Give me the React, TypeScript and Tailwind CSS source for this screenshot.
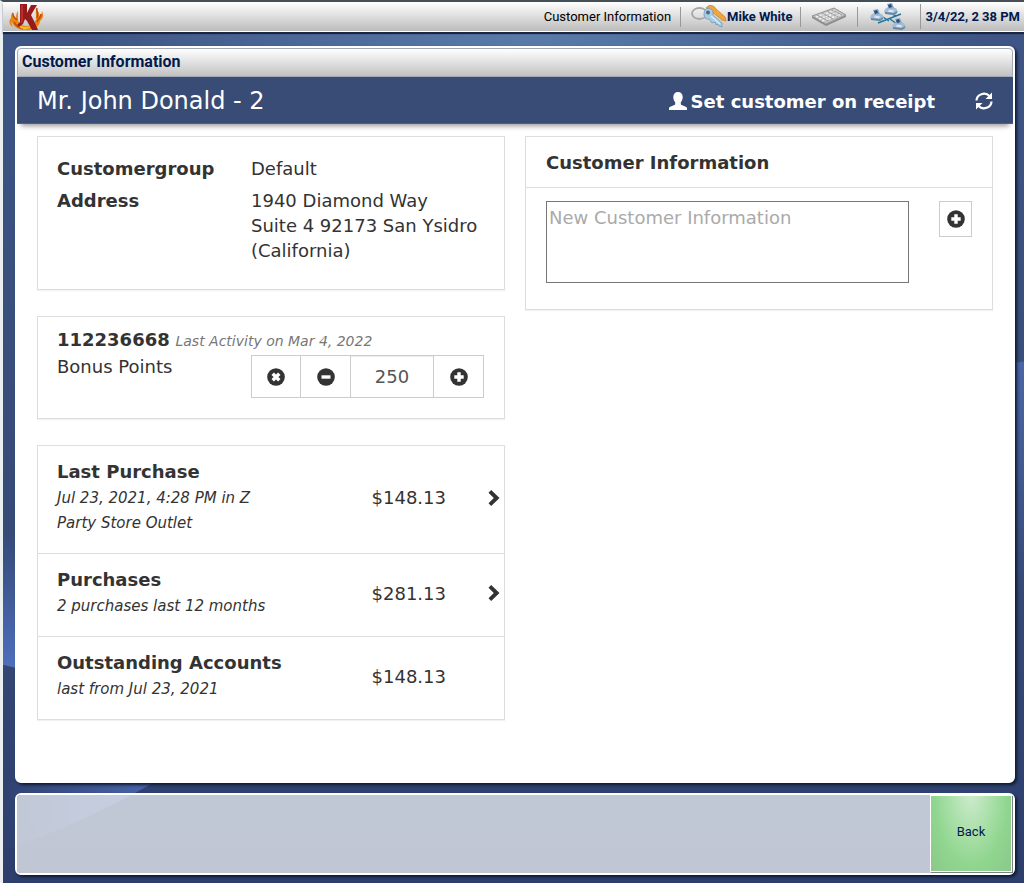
import clsx from "clsx";
import type { ReactNode } from "react";

type IconProps = { className?: string };

function Wallpaper() {
  return (
    <svg
      className="absolute inset-0 -z-10 h-full w-full"
      viewBox="0 0 1021 850"
      preserveAspectRatio="none"
      aria-hidden="true"
    >
      <defs>
        <linearGradient id="sky" x1="0" y1="0" x2="0" y2="1">
          <stop offset="0" stopColor="#3e5585" />
          <stop offset="0.6" stopColor="#364a78" />
          <stop offset="1" stopColor="#2d3e6d" />
        </linearGradient>
        <linearGradient id="glowLeft" x1="0" y1="0" x2="0" y2="1">
          <stop offset="0" stopColor="#4f6fbd" stopOpacity="0" />
          <stop offset="1" stopColor="#4f6fbd" />
        </linearGradient>
        <linearGradient id="glowRight" x1="0" y1="0" x2="0" y2="1">
          <stop offset="0" stopColor="#4a66a5" />
          <stop offset="1" stopColor="#4a66a5" stopOpacity="0" />
        </linearGradient>
        <linearGradient id="glowBottom" x1="0" y1="0" x2="1" y2="0">
          <stop offset="0" stopColor="#4864aa" stopOpacity="0" />
          <stop offset="1" stopColor="#4864aa" />
        </linearGradient>
        <radialGradient id="glowTop">
          <stop offset="0" stopColor="#5a7cab" />
          <stop offset="1" stopColor="#5a7cab" stopOpacity="0" />
        </radialGradient>
      </defs>
      <rect width="1021" height="850" fill="url(#sky)" />
      <ellipse cx="530" cy="0" rx="460" ry="150" fill="url(#glowTop)" />
      <path d="M0 500H12V635L0 632Z" fill="url(#glowLeft)" />
      <path d="M0 818Q80 790 150 750H0Z" fill="url(#glowBottom)" />
      <path d="M1008 331 1021 329V560H1008Z" fill="url(#glowRight)" />
    </svg>
  );
}

function Logo() {
  return (
    <svg className="h-7 w-9" viewBox="0 0 36 28" aria-hidden="true">
      <path
        d="M4 9c-2 3 1 5 3 7 0-3 0-5 2-8v9c1 4 5 6 9 6 5 0 9-3 9-8 0-4-1-6 1-10 0 3 3 4 2 8 2-1 3-3 3-5 2 4 1 8-2 10 0 5-6 9-13 9C10 27 4 24 3 19c-1 1 0 3 1 5-5-3-4-7-2-9 0-2 0-4 2-6Z"
        fill="#e98512"
      />
      <path
        d="M4 10c-1 3 2 5 4 7M28 5c-2 4 3 5 0 10M32 11c0 4-3 5-4 8M5 19c2 4 5 6 9 7"
        fill="none"
        stroke="#c2470c"
        strokeWidth="1.500"
      />
      <path d="M8 20c3 4 11 6 16 1-3 7-14 7-16-1Z" fill="#f8bd2b" />
      <path
        d="M11 1h7v9l4-8h6l-6 10 4 8 3 7h-6l-5-9-2-2-2 5-4 3-2-2 3-3Z"
        fill="#971b1b"
      />
      <path d="M12 2h2v17l-2 2Z" fill="#b92d2a" />
    </svg>
  );
}

function KeysIcon() {
  return (
    <svg className="h-6 w-9" viewBox="0 0 36 24" aria-hidden="true">
      <path
        d="M15 3c3-4 8-3 10 1l9 8 1 4-4-1-10-8Z"
        fill="#f0a63a"
        stroke="#c9822a"
        strokeWidth="0.8"
      />
      <ellipse
        cx="8.500"
        cy="8.500"
        rx="7.500"
        ry="5.500"
        fill="none"
        stroke="#a5a5a5"
        strokeWidth="1.800"
      />
      <path
        d="M14 5c2-3 7-2 8 2v3l9 8v4l-3-1-1-2-2 1-1-3-3 1-3-4c-5 1-6-5-4-9Z"
        fill="#abcbe2"
        stroke="#7198b5"
        strokeWidth="0.8"
      />
      <circle cx="17" cy="7.500" r="2" fill="#4c6882" />
      <path d="m20 11 9 8" stroke="#dfedf6" strokeWidth="1.200" />
    </svg>
  );
}

function KeyboardIcon() {
  return (
    <svg className="h-5 w-9" viewBox="0 0 36 20" aria-hidden="true">
      <path d="m1 9 22-8 12 7v2L15 19 1 11Z" fill="#8c8c8c" />
      <path d="m1 9 22-8 12 7-20 9Z" fill="#c2c2c2" stroke="#999" />
      <path
        d="m5 10 20-7M8 12l20-7M11 14l20-7"
        fill="none"
        stroke="#f0f0f0"
        strokeWidth="1.800"
        strokeDasharray="2.500 1"
      />
      <path
        d="m6 8 11 6M11 6l11 6M16 4l11 6M21 3l10 5"
        fill="none"
        stroke="#8c8c8c"
        strokeWidth="0.8"
      />
    </svg>
  );
}

function Register({ x, y }: { x: number; y: number }) {
  return (
    <g transform={`translate(${x} ${y})`}>
      <path d="m1 6 3-2 8 1 2 4-3 3-9-1-2-2Z" fill="#a3bdd2" />
      <path d="m1 9 9 1 3-2v2l-3 2-9-1Z" fill="#6588a7" />
      <path d="m3 1 5-1 2 5-5 1Z" fill="#87a9c8" />
      <path d="m4 2 3-1 1 3-3 1Z" fill="#2b4d79" />
      <path d="m5 7 5 1M4 8l5 1" stroke="#f2f8fc" strokeWidth="0.8" />
    </g>
  );
}

function NetworkIcon() {
  return (
    <svg className="h-7 w-10" viewBox="0 0 40 28" aria-hidden="true">
      <path
        d="m9 20 23-9M14 14l6 4M20 9l7 4M21 16l7 5"
        fill="none"
        stroke="#24779a"
        strokeWidth="1.500"
      />
      <Register x={1} y={6} />
      <Register x={15} y={0} />
      <Register x={23} y={15} />
    </svg>
  );
}

function UserIcon({ className }: IconProps) {
  return (
    <svg className={className} viewBox="0 0 18 18" aria-hidden="true">
      <path
        d="M9 0c3 0 4.700 2 4.700 5 0 2-.7 4-1.900 5.300v1.600c0 .6.300 1 .9 1.200l4 1.600c.9.400 1.300 1 1.300 1.900V18H0v-1.400c0-.9.400-1.500 1.300-1.900l4-1.600c.6-.2.900-.6.900-1.200v-1.600C5 9 4.300 7 4.300 5c0-3 1.700-5 4.700-5Z"
        fill="currentColor"
      />
    </svg>
  );
}

function RefreshIcon({ className }: IconProps) {
  return (
    <svg className={className} viewBox="0 0 18 18" aria-hidden="true">
      <path
        d="M1.500 8.500A7.500 7 0 0 1 14.500 4M16.500 9.500A7.500 7 0 0 1 3.500 14"
        fill="none"
        stroke="currentColor"
        strokeWidth="2.200"
      />
      <path d="M17 .5V7h-6.500ZM1 17.500V11h6.500Z" fill="currentColor" />
    </svg>
  );
}

function SignIcon({ kind }: { kind: "plus" | "minus" | "remove" }) {
  return (
    <svg className="size-[18px]" viewBox="0 0 18 18" aria-hidden="true">
      <circle cx="9" cy="9" r="8.800" fill="#333" />
      {kind === "minus" ? (
        <path d="M4.500 7.300h9v3.400h-9Z" fill="#fff" />
      ) : (
        <path
          d="M7.300 4.300h3.400v3h3v3.400h-3v3H7.300v-3h-3V7.300h3Z"
          fill="#fff"
          transform={kind === "remove" ? "rotate(45 9 9)" : undefined}
        />
      )}
    </svg>
  );
}

function ChevronIcon() {
  return (
    <svg className="h-4 w-3" viewBox="0 0 12 16" aria-hidden="true">
      <path d="m3.200 0 8.300 8-8.300 8L.5 13.200 5.800 8 .5 2.800Z" fill="#333" />
    </svg>
  );
}

function StatusBar() {
  return (
    <header className="relative z-10 flex h-[30px] items-center justify-between border-b border-white bg-linear-to-b from-white to-[#bdbdbd] pl-1.5 font-['Roboto',sans-serif] text-[13px] text-black shadow-[0_2px_1px_#1b2740]">
      <Logo />
      <div className="flex h-full items-center">
        <span className="px-[9px]">Customer Information</span>
        <button className="flex h-5 items-center border-l border-[#999] pr-2 pl-2.5 font-bold text-[#001a4d]">
          <KeysIcon />
          Mike White
        </button>
        <button
          className="flex h-5 items-center border-l border-[#999] px-2.5"
          aria-label="Keyboard"
        >
          <KeyboardIcon />
        </button>
        <button
          className="flex h-5 items-center border-l border-[#999] px-[11px]"
          aria-label="Network"
        >
          <NetworkIcon />
        </button>
        <time className="border-l border-[#999] px-1 font-bold text-[#001a4d]">
          3/4/22, 2 38 PM
        </time>
      </div>
    </header>
  );
}

function Card({ className, children }: { className?: string; children: ReactNode }) {
  return (
    <section
      className={clsx("border border-[#ddd] bg-white shadow-[0_1px_1px_#0000000d]", className)}
    >
      {children}
    </section>
  );
}

function BonusPoints() {
  return (
    <div className="mt-px flex h-[43px] divide-x divide-[#ccc] border border-[#ccc]">
      <button className="flex w-[49px] items-center justify-center" aria-label="Reset points">
        <SignIcon kind="remove" />
      </button>
      <button className="flex w-[50px] items-center justify-center" aria-label="Remove points">
        <SignIcon kind="minus" />
      </button>
      <input
        id="bonus"
        className="w-[83px] text-center text-[#555] shadow-[inset_0_1px_1px_#00000013]"
        defaultValue="250"
      />
      <button className="flex w-[49px] items-center justify-center" aria-label="Add points">
        <SignIcon kind="plus" />
      </button>
    </div>
  );
}

const accounts = [
  {
    title: "Last Purchase",
    note: "Jul 23, 2021, 4:28 PM in Z Party Store Outlet",
    amount: "$148.13",
    link: true,
  },
  {
    title: "Purchases",
    note: "2 purchases last 12 months",
    amount: "$281.13",
    link: true,
  },
  {
    title: "Outstanding Accounts",
    note: "last from Jul 23, 2021",
    amount: "$148.13",
    link: false,
  },
];

export default function App() {
  return (
    <div className="flex min-h-screen flex-col border-t-2 border-l-[3px] border-t-[#454f58] border-l-[#eceff0] font-['DejaVu_Sans',sans-serif] text-[18px] leading-[25px] text-[#333]">
      <StatusBar />

      <div className="relative isolate flex grow flex-col gap-2.5 pt-3.5 pr-[9px] pb-2 pl-3">
        <Wallpaper />

        <main className="grow rounded-md border-2 border-white bg-white shadow-[2px_2px_3px_#0f1a30]">
          <h1 className="h-[29px] rounded-t-sm border border-[#a3a8b5] bg-linear-to-b from-white to-[#c2c2c2] px-1 font-['Roboto',sans-serif] text-[16px] leading-[26px] font-bold text-[#001a4d]">
            Customer Information
          </h1>
          <div className="flex h-[47px] items-center border-b border-[#4a5f96] bg-[#384c75] px-5 pt-0.5 text-white shadow-[0_6px_5px_-4px_#00000066]">
            <h2 className="grow text-[24px]">Mr. John Donald - 2</h2>
            <button className="flex items-center gap-1 font-bold">
              <UserIcon className="size-[18px]" />
              Set customer on receipt
            </button>
            <button className="ml-10" aria-label="Refresh">
              <RefreshIcon className="size-[18px]" />
            </button>
          </div>

          <div className="grid grid-cols-2 items-start gap-5 px-5 pt-3 pb-5">
            <div className="flex flex-col gap-[26px]">
              <Card className="px-[19px] pt-[19px] pb-[26px]">
                <dl className="grid grid-cols-[194px_1fr] gap-y-[7px]">
                  <dt className="font-bold">Customergroup</dt>
                  <dd>Default</dd>
                  <dt className="font-bold">Address</dt>
                  <dd>
                    1940 Diamond Way
                    <br />
                    Suite 4 92173 San Ysidro
                    <br />
                    (California)
                  </dd>
                </dl>
              </Card>

              <Card className="px-[19px] pt-2.5 pb-5">
                <p>
                  <b>112236668</b>{" "}
                  <i className="text-[14px] text-[#777]">Last Activity on Mar 4, 2022</i>
                </p>
                <div className="flex items-start">
                  <label htmlFor="bonus" className="w-[194px]">
                    Bonus Points
                  </label>
                  <BonusPoints />
                </div>
              </Card>

              <Card className="divide-y divide-[#ddd]">
                {accounts.map((account) => (
                  <div
                    key={account.title}
                    className="flex items-center pt-[13px] pr-1 pb-[17px] pl-[19px]"
                  >
                    <div className="w-[228px]">
                      <h3 className="font-bold">{account.title}</h3>
                      <p className="pt-0.5 text-[15px] italic">{account.note}</p>
                    </div>
                    <span className="w-[161px] text-right">{account.amount}</span>
                    {account.link ? (
                      <button className="ml-auto" aria-label={`Open ${account.title}`}>
                        <ChevronIcon />
                      </button>
                    ) : null}
                  </div>
                ))}
              </Card>
            </div>

            <Card>
              <h3 className="border-b border-[#ddd] px-5 pt-[13px] pb-3 font-bold">
                Customer Information
              </h3>
              <div className="flex items-start justify-between px-5 pt-[13px] pb-[26px]">
                <textarea
                  className="h-[82px] w-[363px] resize-none border border-[#767676] px-0.5 pt-[3px] placeholder:text-[#aaa]"
                  placeholder="New Customer Information"
                  aria-label="New Customer Information"
                />
                <button
                  className="flex h-9 w-[33px] items-center justify-center border border-[#ccc]"
                  aria-label="Add information"
                >
                  <SignIcon kind="plus" />
                </button>
              </div>
            </Card>
          </div>
        </main>

        <footer className="flex h-[82px] justify-end rounded-md border-2 border-white bg-[#f2f4f7]/75 bg-clip-padding pr-px pb-px shadow-[2px_2px_3px_#0f1a30]">
          <button className="w-[82px] border border-white bg-[radial-gradient(ellipse_at_50%_-5%,#ceeccd_0%,#90d68f_65%,#8bc389_110%)] pb-1 font-['Roboto',sans-serif] text-[13px] text-[#001a4d] shadow-[1px_1px_#7c8285]">
            Back
          </button>
        </footer>
      </div>
    </div>
  );
}
